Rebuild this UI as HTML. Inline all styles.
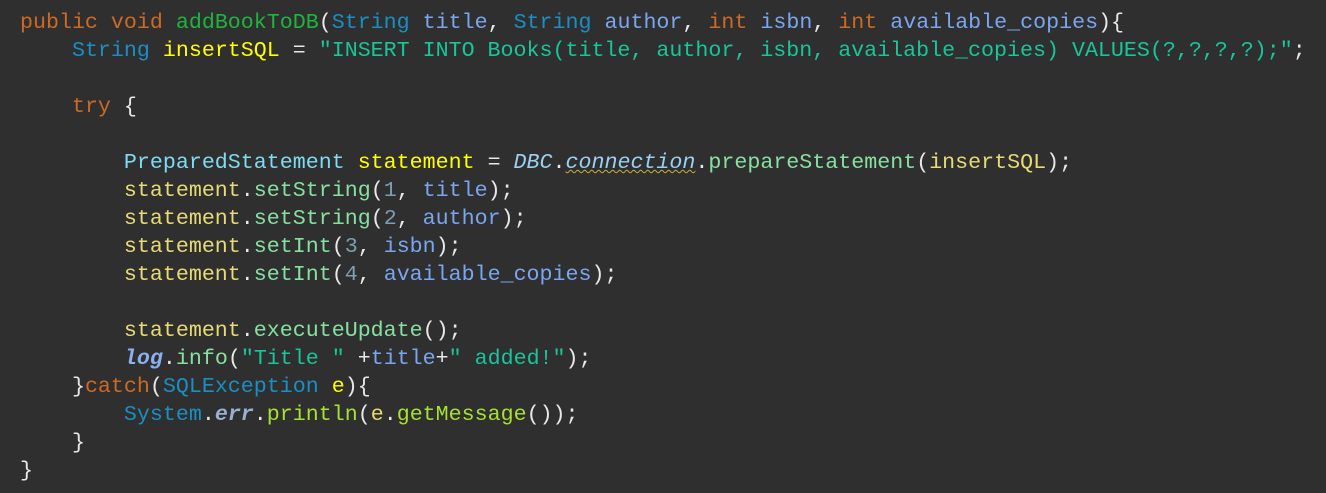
<!DOCTYPE html>
<html><head><meta charset="utf-8"><style>
html,body{margin:0;padding:0;background:#2f2f2f;width:1326px;height:493px;overflow:hidden}
pre{margin:0;position:absolute;left:20px;top:-19px;font-family:"Liberation Mono",monospace;font-size:21.65px;line-height:28px;color:#e8e8e8}
.k{color:#cc6a24}.m{color:#1db53f}.t{color:#1a8fc4}.p{color:#7aa6f0}.v{color:#ffff00}
.s{color:#17c69b}.u{color:#e6db74}.c{color:#86e0a0}.g{color:#a6e22e}.pt{color:#7fdcf0}
.n{color:#7d9fb0}.i{font-style:italic;color:#9ad0f0}.b{font-style:italic;font-weight:bold;color:#8ab0f0}
.w{text-decoration:underline wavy #c8b040;text-decoration-thickness:1px}
.ev{color:#ffff00}.cm{color:#777}
</style></head><body><pre><span class="cm">                                     Test add book</span>
<span class="k">public void</span> <span class="m">addBookToDB</span>(<span class="t">String</span> <span class="p">title</span>, <span class="t">String</span> <span class="p">author</span>, <span class="k">int</span> <span class="p">isbn</span>, <span class="k">int</span> <span class="p">available_copies</span>){
    <span class="t">String</span> <span class="v">insertSQL</span> = <span class="s">"INSERT INTO Books(title, author, isbn, available_copies) VALUES(?,?,?,?);"</span>;

    <span class="k">try</span> {

        <span class="pt">PreparedStatement</span> <span class="v">statement</span> = <span class="i">DBC</span>.<span class="i w">connection</span>.<span class="c">prepareStatement</span>(<span class="u">insertSQL</span>);
        <span class="u">statement</span>.<span class="c">setString</span>(<span class="n">1</span>, <span class="p">title</span>);
        <span class="u">statement</span>.<span class="c">setString</span>(<span class="n">2</span>, <span class="p">author</span>);
        <span class="u">statement</span>.<span class="c">setInt</span>(<span class="n">3</span>, <span class="p">isbn</span>);
        <span class="u">statement</span>.<span class="c">setInt</span>(<span class="n">4</span>, <span class="p">available_copies</span>);

        <span class="u">statement</span>.<span class="c">executeUpdate</span>();
        <span class="b">log</span>.<span class="c">info</span>(<span class="s">"Title "</span> +<span class="p">title</span>+<span class="s">" added!"</span>);
    }<span class="k">catch</span>(<span class="t">SQLException</span> <span class="ev">e</span>){
        <span class="t">System</span>.<span class="b" style="color:#9ab0d0">err</span>.<span class="g">println</span>(<span class="u">e</span>.<span class="g">getMessage</span>());
    }
}</pre></body></html>
